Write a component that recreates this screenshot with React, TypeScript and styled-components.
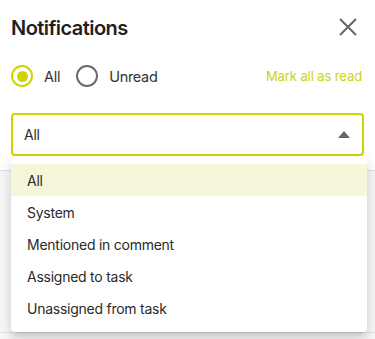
import React, { useState } from 'react';
import styled, { createGlobalStyle } from 'styled-components';

const ACCENT = '#cdd500';

const GlobalStyle = createGlobalStyle`
  html, body {
    margin: 0;
    padding: 0;
    background: #ffffff;
    font-family: Inter, 'Noto Sans', sans-serif;
    color: #222222;
  }
`;

const Page = styled.div`
  position: relative;
  width: 375px;
  height: 339px;
  overflow: hidden;
  background: #ffffff;
`;

const Top = styled.div`
  padding: 0 11px 0 11px;
`;

const Header = styled.div`
  display: flex;
  align-items: center;
  justify-content: space-between;
  height: 54px;
`;

const Title = styled.h1`
  margin: 0;
  padding-top: 1px;
  font-size: 20px;
  font-weight: 600;
  letter-spacing: -0.55px;
  color: #1f1f1f;
`;

const CloseButton = styled.button`
  display: flex;
  align-items: center;
  justify-content: center;
  width: 30px;
  height: 30px;
  margin-right: 1px;
  padding: 0;
  border: none;
  background: none;
  cursor: pointer;
`;

const FilterRow = styled.div`
  display: flex;
  align-items: center;
  height: 44px;
`;

const RadioLabel = styled.label`
  display: flex;
  align-items: center;
  gap: 11px;
  margin-right: 16px;
  font-size: 14.5px;
  letter-spacing: -0.3px;
  color: #333333;
  cursor: pointer;
`;

const RadioCircle = styled.span<{ $checked: boolean }>`
  display: flex;
  align-items: center;
  justify-content: center;
  box-sizing: border-box;
  width: 22px;
  height: 22px;
  border-radius: 50%;
  border: 2px solid ${p => (p.$checked ? ACCENT : '#6b6b6b')};

  &::after {
    content: '';
    display: ${p => (p.$checked ? 'block' : 'none')};
    width: 11px;
    height: 11px;
    border-radius: 50%;
    background: ${ACCENT};
  }
`;

const MarkRead = styled.button`
  margin-left: auto;
  margin-right: 2px;
  padding: 0;
  border: none;
  background: none;
  font-family: inherit;
  font-size: 13px;
  letter-spacing: -0.1px;
  color: #c9d21c;
  cursor: pointer;
`;

const SelectBox = styled.div`
  display: flex;
  align-items: center;
  justify-content: space-between;
  box-sizing: border-box;
  height: 43px;
  margin-top: 15px;
  padding: 0 12px 0 11px;
  border: 2px solid ${ACCENT};
  border-radius: 4px;
  font-size: 14px;
  letter-spacing: -0.25px;
  color: #2a2a2a;
`;

const ListArea = styled.div`
  margin-top: 14px;
  height: 200px;
  background: #f6f6f6;
  border-top: 1px solid #dedede;
`;

const ListRow = styled.div`
  height: 161px;
  border-bottom: 1px solid #e3e3e3;
`;

const Menu = styled.ul`
  position: absolute;
  left: 11px;
  top: 156px;
  width: 356px;
  margin: 0;
  padding: 8px 0;
  list-style: none;
  background: #ffffff;
  border-radius: 4px;
  box-shadow: 0 5px 5px -3px rgba(0, 0, 0, 0.12), 0 8px 10px 1px rgba(0, 0, 0, 0.08),
    0 3px 14px 2px rgba(0, 0, 0, 0.06);
`;

const MenuItem = styled.li<{ $selected: boolean }>`
  display: flex;
  align-items: center;
  height: 32px;
  padding: 0 16px;
  font-size: 14px;
  letter-spacing: -0.25px;
  color: #2a2a2a;
  background: ${p => (p.$selected ? '#f5f6da' : 'transparent')};
  cursor: pointer;
`;

const options = ['All', 'System', 'Mentioned in comment', 'Assigned to task', 'Unassigned from task'];

export default function App() {
  const [filter, setFilter] = useState<'all' | 'unread'>('all');
  const [type, setType] = useState('All');

  return (
    <>
      <GlobalStyle />
      <Page>
        <Top>
          <Header>
            <Title>Notifications</Title>
            <CloseButton aria-label="Close">
              <svg width="20" height="20" viewBox="0 0 20 20">
                <path d="M2 2 L18 18 M18 2 L2 18" stroke="#666666" strokeWidth="2" strokeLinecap="butt" />
              </svg>
            </CloseButton>
          </Header>
          <FilterRow>
            <RadioLabel onClick={() => setFilter('all')}>
              <RadioCircle $checked={filter === 'all'} />
              All
            </RadioLabel>
            <RadioLabel onClick={() => setFilter('unread')}>
              <RadioCircle $checked={filter === 'unread'} />
              Unread
            </RadioLabel>
            <MarkRead>Mark all as read</MarkRead>
          </FilterRow>
          <SelectBox>
            <span>{type}</span>
            <svg width="12" height="7" viewBox="0 0 12 7">
              <path d="M0 7 L6 0 L12 7 Z" fill="#666666" />
            </svg>
          </SelectBox>
        </Top>
        <ListArea>
          <ListRow />
        </ListArea>
        <Menu>
          {options.map(o => (
            <MenuItem key={o} $selected={o === type} onClick={() => setType(o)}>
              {o}
            </MenuItem>
          ))}
        </Menu>
      </Page>
    </>
  );
}
